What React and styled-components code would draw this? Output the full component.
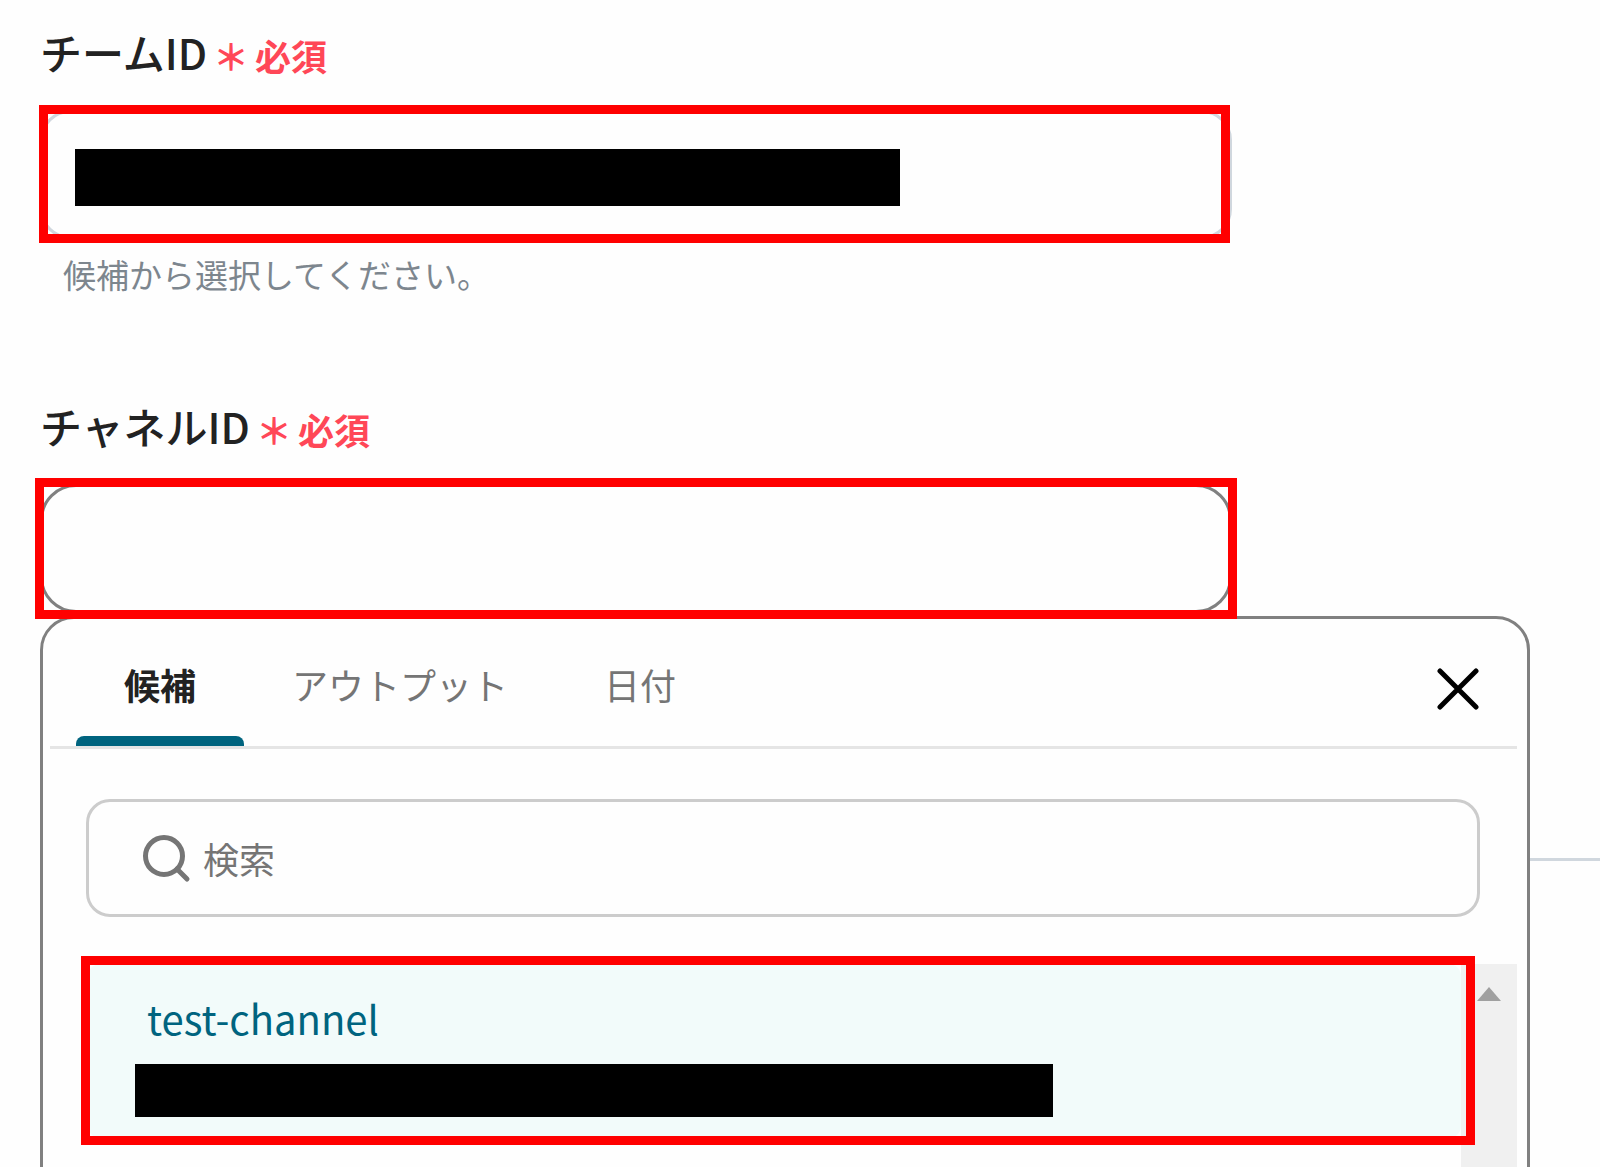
import React, { useState } from 'react'
import styled, { createGlobalStyle, css } from 'styled-components'

const GlobalStyle = createGlobalStyle`
  * {
    box-sizing: border-box;
  }
  body {
    margin: 0;
    background: #fefefe;
    font-family: 'Noto Sans CJK JP', sans-serif;
  }
  button,
  input {
    font: inherit;
  }
`

const Page = styled.main`
  position: relative;
  min-height: 100vh;
  padding: 22px 0 0 40px;
  overflow: hidden;
`

const Field = styled.div`
  position: relative;
  margin-right: 70px;
`

const LabelRow = styled.div`
  display: flex;
  align-items: center;
  height: 60px;
  margin-bottom: 28px;
`

const Label = styled.label`
  color: #222;
  font-size: 42px;
  font-weight: 500;
  line-height: 60px;
`

const Required = styled.span`
  display: flex;
  gap: 6px;
  padding: 6px 0 0 6px;
  color: #ff4757;
  font-size: 36px;
  font-weight: 700;
  line-height: 54px;
`

const highlight = css`
  position: relative;
  &::after {
    content: '';
    position: absolute;
    z-index: 2;
    inset: ${(props) => props.$inset};
    border: 9px solid #f00;
    pointer-events: none;
  }
`

const InputBox = styled.div`
  ${highlight}
  width: 80%;
  height: 129px;
`

const TextInput = styled.input`
  width: 100%;
  height: 100%;
  padding: 0 32px;
  border: 3px solid ${(props) => (props.$open ? '#808080' : '#d0d7de')};
  border-radius: ${(props) => (props.$open ? 36 : 30)}px;
  outline: none;
  background: transparent;
  font-size: 36px;
`

const InputMask = styled.span`
  position: absolute;
  top: 39px;
  left: 35px;
  width: 825px;
  max-width: 90%;
  height: 57px;
  background: #000;
`

const Help = styled.p`
  height: 48px;
  margin: 11px 0 98px;
  padding-left: 23px;
  color: #7d868e;
  font-size: 33px;
  line-height: 48px;
`

const Divider = styled.hr`
  height: 3px;
  margin: 245px 0 0;
  border: 0;
  background: #d0d7de;
`

const Panel = styled.div`
  position: absolute;
  z-index: 1;
  top: 100%;
  left: 0;
  right: 0;
  margin-top: 3px;
  padding: 0 10px 0 7px;
  border: 3px solid #808080;
  border-radius: 34px;
  background: #fefefe;
`

const PanelHeader = styled.div`
  display: flex;
  align-items: stretch;
  justify-content: space-between;
  height: 130px;
  padding: 0 30px 0 26px;
  border-bottom: 3px solid #e5e5e5;
`

const Tabs = styled.div`
  display: flex;
`

const Tab = styled.button`
  position: relative;
  padding: 2px 48px 0;
  border: 0;
  background: none;
  color: ${(props) => (props.$active ? '#222' : '#757575')};
  font-size: 36px;
  font-weight: ${(props) => (props.$active ? 700 : 400)};
  cursor: pointer;
  &::after {
    content: '';
    position: absolute;
    right: 0;
    bottom: 0;
    left: 0;
    height: 10px;
    border-radius: 8px 8px 0 0;
    background: ${(props) => (props.$active ? '#00647f' : 'transparent')};
  }
`

const CloseButton = styled.button`
  align-self: center;
  display: flex;
  padding: 8px;
  margin-top: 12px;
  border: 0;
  background: none;
  cursor: pointer;
`

const SearchBox = styled.label`
  display: flex;
  align-items: center;
  gap: 12px;
  height: 118px;
  margin: 50px 37px 47px 36px;
  padding: 0 52px;
  border: 3px solid #ccc;
  border-radius: 24px;
`

const SearchInput = styled.input`
  flex: 1;
  min-width: 0;
  padding: 0;
  border: 0;
  outline: none;
  background: none;
  font-size: 36px;
  &::placeholder {
    color: #757575;
    opacity: 1;
  }
`

const ListArea = styled.div`
  display: flex;
  height: 300px;
  padding-left: 38px;
`

const Options = styled.div`
  flex: 1;
`

const Option = styled.button`
  ${highlight}
  display: flex;
  flex-direction: column;
  width: 100%;
  height: 174px;
  padding: 24px 47px 0;
  border: 0;
  border-radius: 12px;
  background: #f2fbfa;
  color: #00647f;
  font-size: 40px;
  line-height: 60px;
  text-align: left;
  cursor: pointer;
`

const OptionMask = styled.span`
  width: 918px;
  max-width: 100%;
  height: 53px;
  margin-top: 16px;
  background: #000;
`

const OptionName = styled.span`
  padding-left: 12px;
`

const ScrollTrack = styled.div`
  display: flex;
  justify-content: center;
  width: 56px;
  padding-top: 23px;
  background: #f0f0f0;
`

const CloseIcon = () => (
  <svg width="42" height="42" viewBox="0 0 42 42" aria-hidden="true">
    <path
      d="M3 3L39 39M39 3L3 39"
      stroke="#000"
      strokeWidth="5"
      strokeLinecap="round"
    />
  </svg>
)

const SearchIcon = () => (
  <svg width="50" height="50" viewBox="0 0 50 50" fill="none" aria-hidden="true">
    <circle cx="23" cy="23" r="18.5" stroke="#757575" strokeWidth="5" />
    <path
      d="M36 36L46 46"
      stroke="#757575"
      strokeWidth="5"
      strokeLinecap="round"
    />
  </svg>
)

const ArrowUp = () => (
  <svg width="24" height="14" viewBox="0 0 24 14" aria-hidden="true">
    <path d="M12 0L24 14H0Z" fill="#a0a0a0" />
  </svg>
)

const FieldLabel = ({ htmlFor, children }) => (
  <LabelRow>
    <Label htmlFor={htmlFor}>{children}</Label>
    <Required>
      <span>＊</span>
      <span>必須</span>
    </Required>
  </LabelRow>
)

const TABS = ['候補', 'アウトプット', '日付']

export default function App() {
  const [tab, setTab] = useState(TABS[0])

  return (
    <Page>
      <GlobalStyle />
      <Field>
        <FieldLabel htmlFor="team-id">チームID</FieldLabel>
        <InputBox $inset="-5px 2px -4px -1px">
          <TextInput id="team-id" type="text" />
          <InputMask />
        </InputBox>
        <Help>候補から選択してください。</Help>
      </Field>
      <Field>
        <FieldLabel htmlFor="channel-id">チャネルID</FieldLabel>
        <InputBox $inset="-6px -5px">
          <TextInput id="channel-id" type="text" $open />
        </InputBox>
        <Panel>
          <PanelHeader>
            <Tabs role="tablist">
              {TABS.map((name) => (
                <Tab
                  key={name}
                  type="button"
                  role="tab"
                  aria-selected={name === tab}
                  $active={name === tab}
                  onClick={() => setTab(name)}
                >
                  {name}
                </Tab>
              ))}
            </Tabs>
            <CloseButton type="button" aria-label="閉じる">
              <CloseIcon />
            </CloseButton>
          </PanelHeader>
          <SearchBox>
            <SearchIcon />
            <SearchInput type="text" placeholder="検索" aria-label="検索" />
          </SearchBox>
          <ListArea>
            <Options>
              <Option type="button" $inset="-8px -14px -7px -7px">
                <OptionName>test-channel</OptionName>
                <OptionMask />
              </Option>
            </Options>
            <ScrollTrack>
              <ArrowUp />
            </ScrollTrack>
          </ListArea>
        </Panel>
      </Field>
      <Divider />
    </Page>
  )
}
